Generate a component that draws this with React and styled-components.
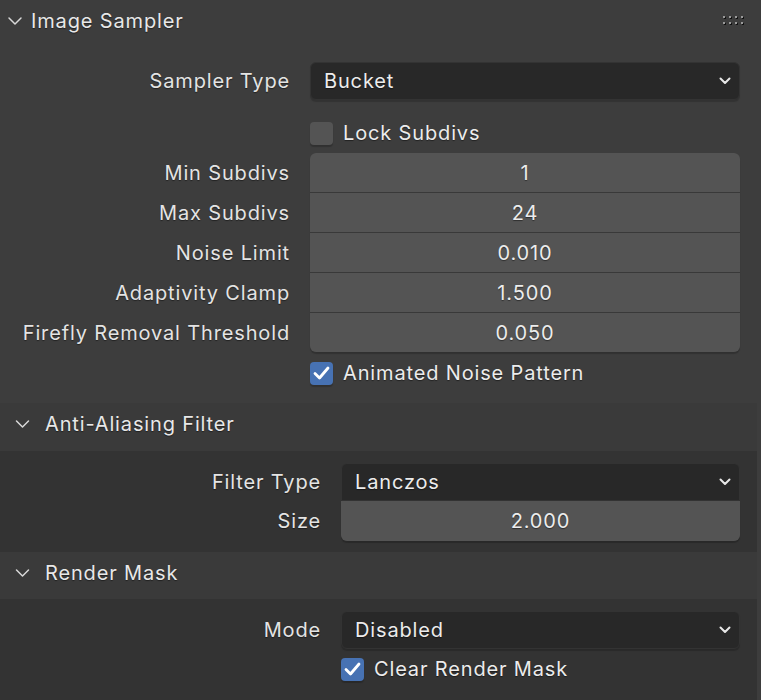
import React from "react";
import styled, { createGlobalStyle } from "styled-components";

const Global = createGlobalStyle`
  html, body { margin: 0; padding: 0; background: #3d3d3d; }
  body { font-family: Inter, "Noto Sans", sans-serif; color: #e6e6e6; }
  * { box-sizing: border-box; }
`;

const Panel = styled.div`
  width: 761px;
  height: 700px;
  background: #3d3d3d;
  overflow: hidden;
  font-size: 20px;
  letter-spacing: 0.85px;
  text-shadow: 0 1px 1px rgba(0, 0, 0, 0.45);
`;

const MainHeader = styled.div`
  height: 42px;
  display: flex;
  align-items: center;
  padding-left: 8px;
  padding-right: 16px;
  padding-bottom: 1px;
`;

const HeaderTitle = styled.span`
  margin-left: ${(p) => p.$gap}px;
  flex: 1;
  color: #e8e8e8;
`;

const MainBody = styled.div`
  padding: 20px 21px 9px 0;
  display: flex;
  flex-direction: column;
`;

const Row = styled.div`
  display: grid;
  grid-template-columns: ${(p) => p.$label}px 1fr;
  column-gap: 20px;
  align-items: center;
  height: ${(p) => p.$h || 40}px;
  margin-bottom: ${(p) => p.$mb || 0}px;
`;

const Label = styled.div`
  text-align: right;
  white-space: nowrap;
  color: #e4e4e4;
`;

const Select = styled.div`
  height: 38px;
  background: #282828;
  border: 1px solid #333333;
  border-radius: ${(p) => (p.$joined ? "6px 6px 0 0" : "6px")};
  box-shadow: ${(p) => (p.$joined ? "none" : "0 2px 1px rgba(0,0,0,0.18)")};
  display: flex;
  align-items: center;
  padding: 0 8px 0 13px;
  color: #ececec;
`;

const SelectText = styled.span`
  flex: 1;
`;

const Stack = styled.div`
  display: flex;
  flex-direction: column;
  gap: 1px;
  background: #393939;
  border-radius: ${(p) => (p.$joined ? "0 0 6px 6px" : "6px")};
  box-shadow: 0 2px 1px rgba(0, 0, 0, 0.2);
  overflow: hidden;
`;

const NumField = styled.div`
  height: ${(p) => p.$h || 39}px;
  background: #545454;
  display: flex;
  align-items: center;
  justify-content: center;
  color: #ececec;
`;

const StackRow = styled.div`
  display: grid;
  grid-template-columns: ${(p) => p.$label}px 1fr;
  column-gap: 20px;
`;

const LabelCol = styled.div`
  display: flex;
  flex-direction: column;
  gap: 1px;
`;

const StackLabel = styled(Label)`
  height: ${(p) => p.$h || 39}px;
  display: flex;
  align-items: center;
  justify-content: flex-end;
`;

const CheckLine = styled.label`
  display: flex;
  align-items: center;
  gap: 10px;
  color: #ececec;
`;

const Box = styled.span`
  width: 23px;
  height: 23px;
  border-radius: 4px;
  background: ${(p) => (p.$on ? "#4772b3" : "#545454")};
  box-shadow: 0 2px 1px rgba(0, 0, 0, 0.2);
  display: flex;
  align-items: center;
  justify-content: center;
`;

const Sub = styled.div`
  margin-right: 4px;
`;

const SubHeader = styled.div`
  height: ${(p) => p.$h}px;
  background: #3a3a3a;
  display: flex;
  align-items: center;
  padding-left: 15px;
  padding-bottom: 6px;
`;

const SubBody = styled.div`
  background: #333333;
  padding: 12px 17px ${(p) => p.$pb}px 0;
`;

const Chevron = ({ w = 14, h = 8 }) => (
  <svg width={w} height={h} viewBox="0 0 14 8" style={{ overflow: "visible" }}>
    <path d="M1 1 L7 7 L13 1" fill="none" stroke="#d8d8d8" strokeWidth="1.5" strokeLinecap="round" strokeLinejoin="round" />
  </svg>
);

const DropArrow = () => (
  <svg width="12" height="8" viewBox="0 0 12 8">
    <path d="M1.5 1.5 L6 6 L10.5 1.5" fill="none" stroke="#e8e8e8" strokeWidth="2" strokeLinecap="round" strokeLinejoin="round" />
  </svg>
);

const Check = () => (
  <svg width="17" height="14" viewBox="0 0 17 14">
    <path d="M2 7.5 L6.5 12 L15 2" fill="none" stroke="#ffffff" strokeWidth="2.8" strokeLinecap="round" strokeLinejoin="round" />
  </svg>
);

const Grip = () => (
  <svg width="22" height="10" viewBox="0 0 22 10">
    {[0, 1, 2, 3].map((c) =>
      [0, 1].map((r) => (
        <g key={`${c}-${r}`}>
          <rect x={c * 6 + 1} y={r * 6 + 1} width="2" height="2" fill="#111" />
          <rect x={c * 6} y={r * 6} width="2" height="2" fill="#9a9a9a" />
        </g>
      ))
    )}
  </svg>
);

const DropDown = ({ value, joined }) => (
  <Select $joined={joined}>
    <SelectText>{value}</SelectText>
    <DropArrow />
  </Select>
);

const CheckBox = ({ on, text }) => (
  <CheckLine>
    <Box $on={on}>{on && <Check />}</Box>
    {text}
  </CheckLine>
);

const numbers = [
  ["Min Subdivs", "1"],
  ["Max Subdivs", "24"],
  ["Noise Limit", "0.010"],
  ["Adaptivity Clamp", "1.500"],
  ["Firefly Removal Threshold", "0.050"],
];

export default function App() {
  return (
    <Panel>
      <Global />
      <MainHeader>
        <Chevron />
        <HeaderTitle $gap={9}>Image Sampler</HeaderTitle>
        <Grip />
      </MainHeader>
      <MainBody>
        <Row $label={290} $h={38} $mb={13}>
          <Label>Sampler Type</Label>
          <DropDown value="Bucket" />
        </Row>
        <Row $label={290}>
          <span />
          <CheckBox text="Lock Subdivs" />
        </Row>
        <StackRow $label={290}>
          <LabelCol>
            {numbers.map(([l]) => (
              <StackLabel key={l}>{l}</StackLabel>
            ))}
          </LabelCol>
          <Stack>
            {numbers.map(([l, v]) => (
              <NumField key={l}>{v}</NumField>
            ))}
          </Stack>
        </StackRow>
        <Row $label={290} $h={42}>
          <span />
          <CheckBox on text="Animated Noise Pattern" />
        </Row>
      </MainBody>

      <Sub>
        <SubHeader $h={48}>
          <Chevron w={15} h={8} />
          <HeaderTitle $gap={15}>Anti-Aliasing Filter</HeaderTitle>
        </SubHeader>
        <SubBody $pb={11}>
          <Row $label={321} $h={38}>
            <Label>Filter Type</Label>
            <DropDown value="Lanczos" joined />
          </Row>
          <StackRow $label={321}>
            <LabelCol>
              <StackLabel $h={40}>Size</StackLabel>
            </LabelCol>
            <Stack $joined>
              <NumField $h={40}>2.000</NumField>
            </Stack>
          </StackRow>
        </SubBody>
      </Sub>

      <Sub>
        <SubHeader $h={47}>
          <Chevron w={15} h={8} />
          <HeaderTitle $gap={15}>Render Mask</HeaderTitle>
        </SubHeader>
        <SubBody $pb={20}>
          <Row $label={321} $h={38}>
            <Label>Mode</Label>
            <DropDown value="Disabled" />
          </Row>
          <Row $label={321}>
            <span />
            <CheckBox on text="Clear Render Mask" />
          </Row>
        </SubBody>
      </Sub>
    </Panel>
  );
}
